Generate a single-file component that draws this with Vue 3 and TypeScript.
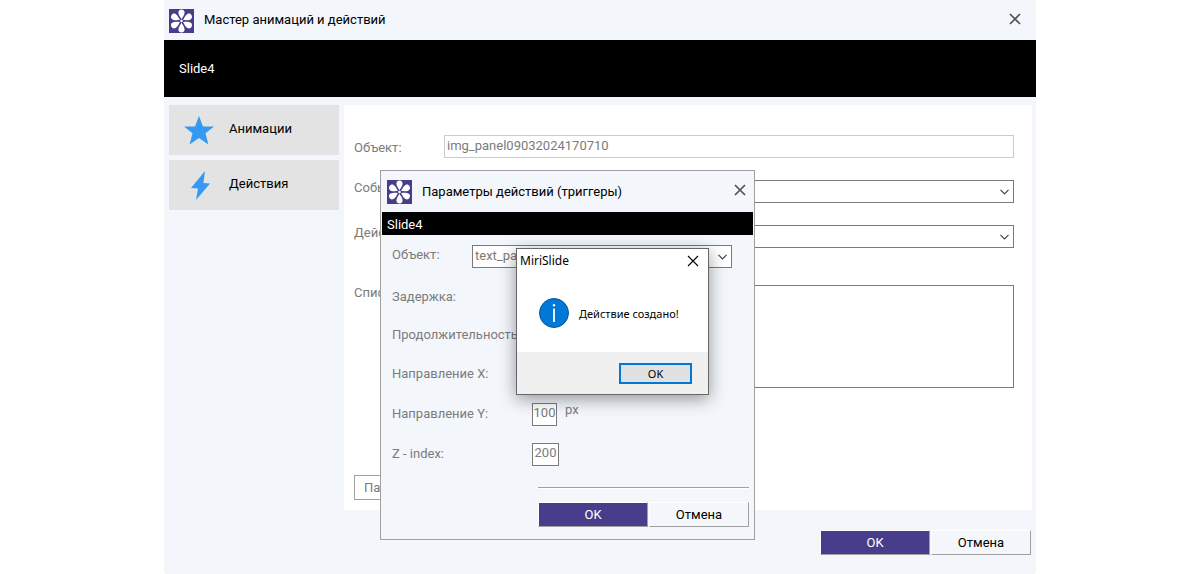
<script setup lang="ts">
import { ref } from 'vue'

const objectName = ref('img_panel09032024170710')
const target = ref('text_panel')
const offsetY = ref('100')
const zIndex = ref('200')
const petals = [0, 60, 120, 180, 240, 300]
</script>

<template>
  <main class="window">
    <header class="titlebar">
      <svg class="logo" viewBox="0 0 25 24" aria-hidden="true">
        <rect width="25" height="24" fill="#483d8b" />
        <path v-for="a in petals" :key="a" :transform="`rotate(${a} 12.5 12)`"
          d="M12.5 10.2C11.6 8.4 9.4 6 9.4 3.4C9.4 1.4 10.8 .4 12.5 .4S15.6 1.4 15.6 3.4C15.6 6 13.4 8.4 12.5 10.2Z" fill="#fff" />
        <circle cx="12.5" cy="12" r="1.3" fill="#fff" />
      </svg>
      <h1>Мастер анимаций и действий</h1>
      <button class="close" type="button" aria-label="Закрыть">
        <svg viewBox="0 0 12 12"><path d="M1 1L11 11M11 1L1 11" stroke="#505256" stroke-width="1.7" fill="none" /></svg>
      </button>
    </header>
    <div class="banner">Slide4</div>

    <div class="content">
      <nav class="sidebar">
        <button type="button">
          <svg class="star" viewBox="0 0 30 29"><path d="M15 0L19 10.4H30L21.5 17.2L24.4 28.5L15 22L5.6 28.5L8.5 17.2L0 10.4H11Z" fill="#3399f3" /></svg>
          <span>Анимации</span>
        </button>
        <button type="button">
          <svg class="bolt" viewBox="0 -1 30 30"><path d="M21 0L7 17L14 17.6L12 29L26 12.5L19.4 12Z" fill="#3399f3" /></svg>
          <span>Действия</span>
        </button>
      </nav>

      <form class="panel" @submit.prevent>
        <div class="field">
          <label for="object">Объект:</label>
          <input id="object" v-model="objectName" class="box pale" type="text" />
        </div>
        <div class="field raised">
          <label for="event">Событие:</label>
          <div class="combo">
            <select id="event" class="box"></select>
            <svg viewBox="0 0 9 6"><path d="M.5 .8L4.5 4.8L8.5 .8" /></svg>
          </div>
        </div>
        <div class="field raised">
          <label for="action">Действие:</label>
          <div class="combo">
            <select id="action" class="box"></select>
            <svg viewBox="0 0 9 6"><path d="M.5 .8L4.5 4.8L8.5 .8" /></svg>
          </div>
        </div>
        <div class="field list">
          <label for="list">Список:</label>
          <textarea id="list" class="box"></textarea>
        </div>
        <button class="params" type="button">Параметры</button>
      </form>
    </div>

    <footer class="actions">
      <button class="primary" type="button">OK</button>
      <button type="button">Отмена</button>
    </footer>

    <section class="dialog" role="dialog" aria-labelledby="dialog-title">
      <header class="titlebar">
        <svg class="logo" viewBox="0 0 25 24" aria-hidden="true">
          <rect width="25" height="24" fill="#483d8b" />
          <path v-for="a in petals" :key="a" :transform="`rotate(${a} 12.5 12)`"
            d="M12.5 10.2C11.6 8.4 9.4 6 9.4 3.4C9.4 1.4 10.8 .4 12.5 .4S15.6 1.4 15.6 3.4C15.6 6 13.4 8.4 12.5 10.2Z" fill="#fff" />
          <circle cx="12.5" cy="12" r="1.3" fill="#fff" />
        </svg>
        <h2 id="dialog-title">Параметры действий (триггеры)</h2>
        <button class="close" type="button" aria-label="Закрыть">
          <svg viewBox="0 0 12 12"><path d="M1 1L11 11M11 1L1 11" stroke="#505256" stroke-width="1.7" fill="none" /></svg>
        </button>
      </header>
      <div class="banner">Slide4</div>
      <form class="options" @submit.prevent>
        <div class="row first">
          <label for="target">Объект:</label>
          <div class="combo">
            <select id="target" v-model="target" class="box"><option>text_panel</option></select>
            <svg viewBox="0 0 9 6"><path d="M.5 .8L4.5 4.8L8.5 .8" /></svg>
          </div>
        </div>
        <div class="row short"><span>Задержка:</span></div>
        <div class="row short"><span>Продолжительность:</span></div>
        <div class="row"><span>Направление X:</span></div>
        <div class="row">
          <label for="dir-y">Направление Y:</label>
          <input id="dir-y" v-model="offsetY" class="box num" type="text" />
          <span class="unit">px</span>
        </div>
        <div class="row">
          <label for="z-index">Z - index:</label>
          <input id="z-index" v-model="zIndex" class="box num wide" type="text" />
        </div>
      </form>
      <footer class="dialog-footer">
        <hr />
        <div class="actions">
          <button class="primary" type="button">OK</button>
          <button type="button">Отмена</button>
        </div>
      </footer>
    </section>

    <section class="message" role="alertdialog" aria-labelledby="message-title">
      <header>
        <h2 id="message-title">MiriSlide</h2>
        <button class="close" type="button" aria-label="Закрыть">
          <svg viewBox="0 0 12 12"><path d="M1 1L11 11M11 1L1 11" stroke="#000" stroke-width="1.1" fill="none" /></svg>
        </button>
      </header>
      <div class="message-body">
        <svg viewBox="0 0 30 30" aria-hidden="true">
          <circle cx="15" cy="15" r="14.5" fill="#0078d7" stroke="#0a5694" />
          <path d="M15 10.5V24" stroke="#fff" stroke-width="1.8" />
          <circle cx="15" cy="7.2" r="1.2" fill="#fff" />
        </svg>
        <p>Действие создано!</p>
      </div>
      <footer><button class="confirm" type="button">OK</button></footer>
    </section>
  </main>
</template>

<style>
body {
  margin: 0;
  background: #fff;
}
</style>

<style scoped>
* {
  box-sizing: border-box;
}
.window {
  position: relative;
  max-width: 872px;
  margin: 0 auto;
  background: #f3f7fc;
  border-radius: 3px;
  color: #000;
  font: 13px/16px Roboto, sans-serif;
}
h1,
h2,
p {
  margin: 0;
  font-size: inherit;
  font-weight: 400;
}
button,
input,
select,
textarea {
  margin: 0;
  padding: 0;
  border-radius: 0;
  font: inherit;
  color: inherit;
}
svg {
  display: block;
  flex: none;
}
.titlebar {
  display: flex;
  align-items: center;
  gap: 10px;
  height: 40px;
  padding: 2px 15px 0 5px;
}
.titlebar h1,
.titlebar h2 {
  flex: 1;
}
.titlebar h1 {
  padding-bottom: 2px;
}
.logo {
  width: 25px;
  height: 24px;
}
.close {
  display: flex;
  border: 0;
  background: none;
}
.close svg {
  width: 12px;
  height: 12px;
}
.window > .titlebar .close {
  margin-bottom: 5px;
}
.banner {
  display: flex;
  align-items: center;
  height: 57px;
  padding-left: 15px;
  background: #000;
  color: #fff;
}
.content {
  display: flex;
  gap: 5px;
  padding: 8px 4px 0 5px;
}
.sidebar {
  display: flex;
  flex-direction: column;
  gap: 5px;
  width: 170px;
}
.sidebar button {
  display: flex;
  align-items: center;
  gap: 15px;
  height: 50px;
  padding: 0 15px;
  border: 0;
  background: #e3e3e3;
}
.sidebar svg {
  width: 30px;
  height: 29px;
}
.sidebar .bolt {
  height: 30px;
}
.sidebar span {
  padding-bottom: 2px;
}
.panel {
  display: flex;
  flex: 1;
  flex-direction: column;
  align-items: stretch;
  gap: 22px;
  min-height: 405px;
  padding: 30px 18px 10px 10px;
  background: #fff;
  color: #7b7b7b;
}
.field {
  display: grid;
  grid-template-columns: 90px 1fr;
}
.field label {
  padding-top: 5px;
}
.raised label {
  padding-top: 0;
}
.list {
  margin-top: 15px;
}
.list label {
  padding-top: 0;
}
.box {
  display: block;
  width: 100%;
  height: 23px;
  border: 1px solid #7a7a7a;
  background: #fff;
  outline: 0;
  appearance: none;
}
.box.pale {
  border-color: #ccc;
  padding: 0 2px 2px;
}
textarea.box {
  height: 103px;
  resize: none;
}
.combo {
  position: relative;
}
.combo select {
  padding: 0 20px 2px 2px;
}
.combo svg {
  position: absolute;
  right: 5px;
  top: 9px;
  width: 9px;
  height: 6px;
  fill: none;
  stroke: #444;
  stroke-width: 1.2;
  pointer-events: none;
}
.params {
  align-self: flex-start;
  height: 25px;
  margin-top: auto;
  padding: 0 9px;
  border: 1px solid #a0a0a0;
  background: #fff;
}
.actions {
  display: flex;
  justify-content: flex-end;
  gap: 1px;
}
.window > .actions {
  height: 64px;
  padding: 20px 5px 0;
}
.actions button {
  width: 100px;
  height: 25px;
  border: 1px solid;
  border-color: #fff #a0a0a0 #a0a0a0 #fff;
  background: #f3f7fc;
}
.actions .primary {
  width: 110px;
  background: #483d8b;
  color: #fff;
}
.dialog {
  position: absolute;
  top: 170px;
  left: 216px;
  width: 375px;
  border: 1px solid #a0a0a0;
  background: #f3f7fc;
}
.dialog .titlebar {
  height: 41px;
  padding: 0 8px 0 6px;
}
.dialog .close {
  margin-bottom: 3px;
}
.dialog .banner {
  height: 23px;
  margin: 0 1px;
  padding: 2px 5px 0;
}
.options {
  padding: 0 22px 0 11px;
  color: #7b7b7b;
}
.row {
  display: grid;
  grid-template-columns: 140px auto 1fr;
  align-items: center;
  height: 40px;
}
.row.first {
  grid-template-columns: 80px 1fr;
  height: 43px;
}
.first label {
  padding-bottom: 4px;
}
.row.short {
  height: 38px;
}
.num {
  width: 25px;
  padding: 0 0 3px;
  text-align: center;
}
.num.wide {
  width: 27px;
}
.unit {
  padding: 0 0 8px 8px;
}
.dialog-footer {
  width: 211px;
  margin: 13px 5px 12px auto;
}
.dialog-footer hr {
  height: 2px;
  margin: 0 0 13px;
  border: solid;
  border-width: 1px 0;
  border-color: #a0a0a0 transparent #fff;
}
.message {
  position: absolute;
  top: 248px;
  left: 352px;
  width: 193px;
  border: 1px solid #666;
  background: #fff;
  box-shadow: 0 4px 16px rgba(0, 0, 0, 0.4);
  font: 12px/16px "Noto Sans", sans-serif;
}
.message header {
  display: flex;
  align-items: center;
  justify-content: space-between;
  height: 24px;
  padding: 0 9px 0 3px;
}
.message-body {
  display: flex;
  align-items: center;
  gap: 10px;
  height: 79px;
  padding: 0 22px 0 22px;
}
.message-body svg {
  width: 30px;
  height: 30px;
}
.message-body p {
  padding-top: 2px;
  white-space: nowrap;
  font-size: 11px;
}
.message footer {
  display: flex;
  justify-content: flex-end;
  height: 42px;
  padding: 11px 16px;
  background: #f0f0f0;
}
.confirm {
  width: 73px;
  height: 21px;
  border: 2px solid #0078d7;
  background: #e1e1e1;
  font-size: 11px;
  line-height: 16px;
}
</style>
